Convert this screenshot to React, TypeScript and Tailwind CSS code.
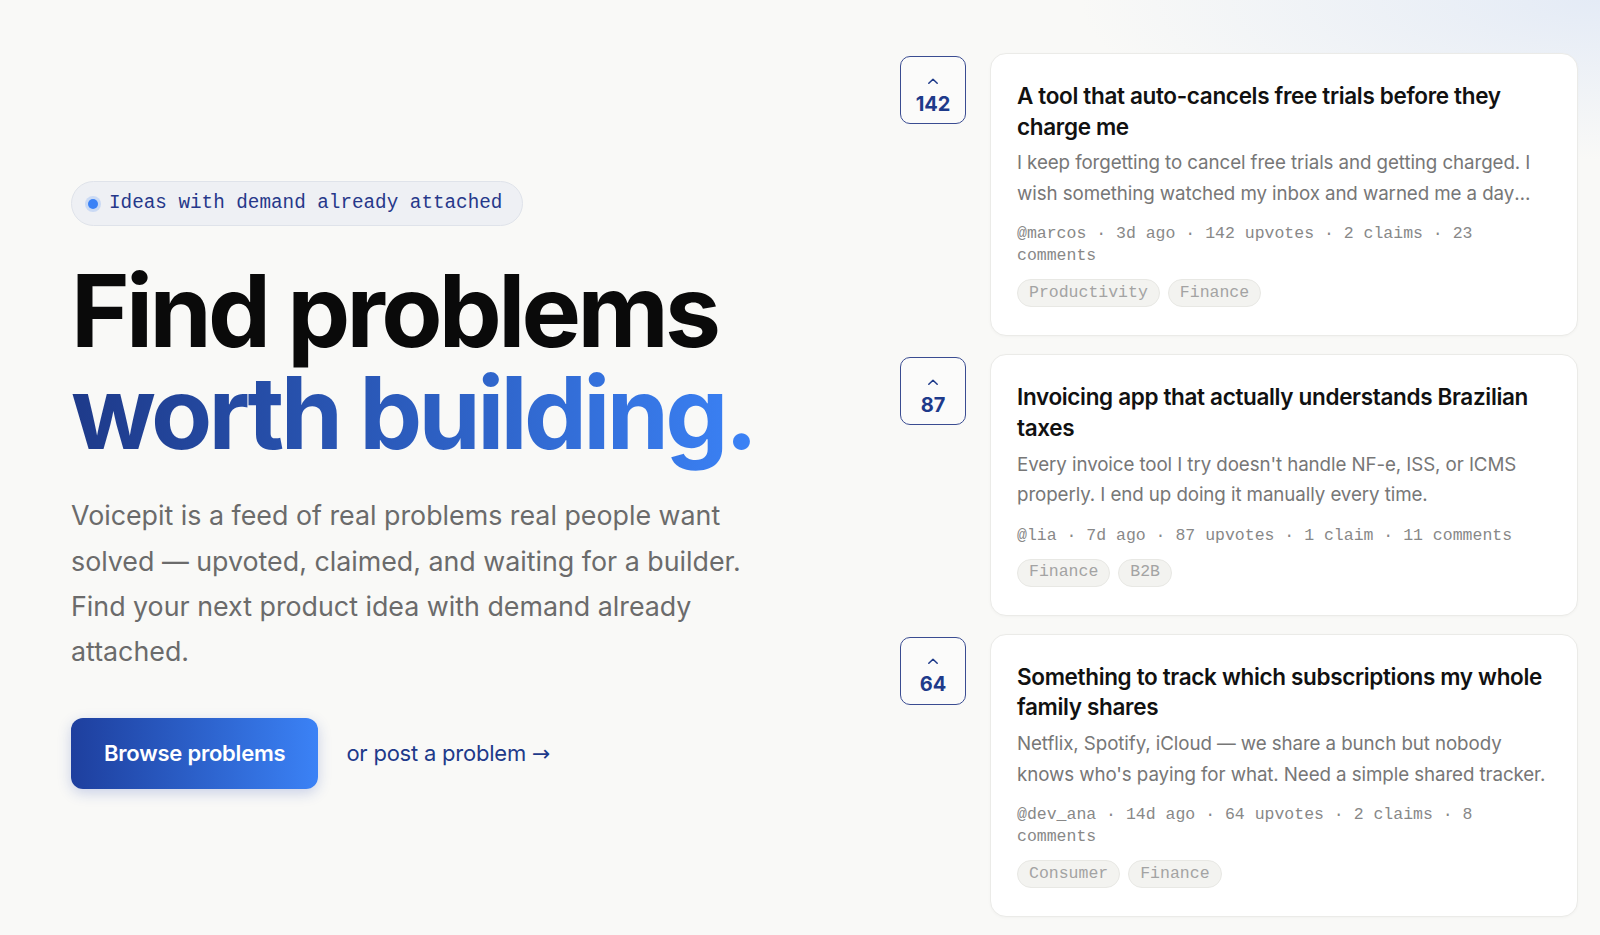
const problems = [
  {
    votes: 142,
    title: "A tool that auto-cancels free trials before they charge me",
    body: "I keep forgetting to cancel free trials and getting charged. I wish something watched my inbox and warned me a day before the card gets hit.",
    meta: "@marcos · 3d ago · 142 upvotes · 2 claims · 23 comments",
    tags: ["Productivity", "Finance"],
  },
  {
    votes: 87,
    title: "Invoicing app that actually understands Brazilian taxes",
    body: "Every invoice tool I try doesn't handle NF-e, ISS, or ICMS properly. I end up doing it manually every time.",
    meta: "@lia · 7d ago · 87 upvotes · 1 claim · 11 comments",
    tags: ["Finance", "B2B"],
  },
  {
    votes: 64,
    title: "Something to track which subscriptions my whole family shares",
    body: "Netflix, Spotify, iCloud — we share a bunch but nobody knows who's paying for what. Need a simple shared tracker.",
    meta: "@dev_ana · 14d ago · 64 upvotes · 2 claims · 8 comments",
    tags: ["Consumer", "Finance"],
  },
];

const sans = "font-['Inter','Noto_Sans',sans-serif]";
const mono = "font-['Liberation_Mono','DejaVu_Sans_Mono',monospace]";

export default function App() {
  return (
    <main
      className={`${sans} flex min-h-screen items-center bg-[#f9f9f7] bg-[radial-gradient(520px_160px_at_100%_0%,#e4ebf6_0%,rgba(249,249,247,0)_100%)] pl-[71px] pr-[22px]`}
    >
      <section className="flex-1">
        <div className="inline-flex h-[45px] items-center gap-[11px] rounded-full border border-[#dfe3ea] bg-[#eef0f4] pl-[16px] pr-[20px]">
          <span className="h-[10px] w-[10px] rounded-full bg-[#3b82f6] ring-[3px] ring-[#3b82f6]/20" />
          <span className={`${mono} text-[19.3px] text-[#26388a]`}>
            Ideas with demand already attached
          </span>
        </div>

        <h1 className="mt-[34px] text-[100px] font-bold leading-[1.02] tracking-[-0.037em] text-[#0a0a0a]">
          Find problems
          <br />
          <span className="bg-linear-to-r from-[#1e3a8a] to-[#3b82f6] bg-clip-text text-transparent">
            worth building.
          </span>
        </h1>

        <p className="mt-[29px] max-w-[700px] text-[26.8px] leading-[45.4px] text-[#6b6b6b]">
          Voicepit is a feed of real problems real people want solved —
          upvoted, claimed, and waiting for a builder. Find your next product
          idea with demand already attached.
        </p>

        <div className="mt-[43px] flex items-center gap-[28px]">
          <button className="h-[71px] rounded-[12px] bg-linear-to-r from-[#1e3f9e] to-[#3b82f6] px-[33px] text-[22px] font-semibold tracking-[-0.01em] text-white shadow-[0_4px_14px_rgba(30,64,175,0.22)]">
            Browse problems
          </button>
          <a className="text-[22px] tracking-[-0.01em] text-[#1e3a8a]">
            or post a problem{" "}
            <span className="font-['DejaVu_Sans',sans-serif]">→</span>
          </a>
        </div>
      </section>

      <section className="flex w-[678px] flex-col gap-[18px] py-[53px]">
        {problems.map((p) => (
          <div key={p.title} className="flex items-start gap-[24px]">
            <button className="mt-[3px] flex h-[68px] w-[66px] shrink-0 flex-col items-center justify-center rounded-[10px] border-[1.5px] border-[#3a4c91] bg-white/40 pt-[10px] text-[#1e3a8a]">
              <svg width="12" height="8" viewBox="0 0 12 8" fill="none">
                <path
                  d="M1.8 6.3 6 2.2l4.2 4.1"
                  stroke="currentColor"
                  strokeWidth="1.5"
                  strokeLinecap="round"
                  strokeLinejoin="round"
                />
              </svg>
              <span className="mt-[9px] text-[20px] font-bold leading-none">
                {p.votes}
              </span>
            </button>

            <article className="flex-1 rounded-[16px] border border-[#ebebe8] bg-white px-[26px] pt-[27px] pb-[28px] shadow-[0_1px_3px_rgba(0,0,0,0.03)]">
              <h2 className="text-[22.5px] font-semibold leading-[30.6px] tracking-[-0.015em] text-[#111111]">
                {p.title}
              </h2>
              <p className="mt-[6px] line-clamp-2 text-[18.75px] leading-[30.6px] tracking-[-0.005em] text-[#777777]">
                {p.body}
              </p>
              <p className={`${mono} mt-[14px] text-[16.5px] leading-[22px] text-[#888888]`}>
                {p.meta}
              </p>
              <div className="mt-[12px] flex gap-[8px]">
                {p.tags.map((t) => (
                  <span
                    key={t}
                    className={`${mono} flex h-[28px] items-center rounded-full border border-[#e8e8e4] bg-[#f3f3f0] px-[11px] text-[16.5px] text-[#a3a3a3]`}
                  >
                    {t}
                  </span>
                ))}
              </div>
            </article>
          </div>
        ))}
      </section>
    </main>
  );
}
